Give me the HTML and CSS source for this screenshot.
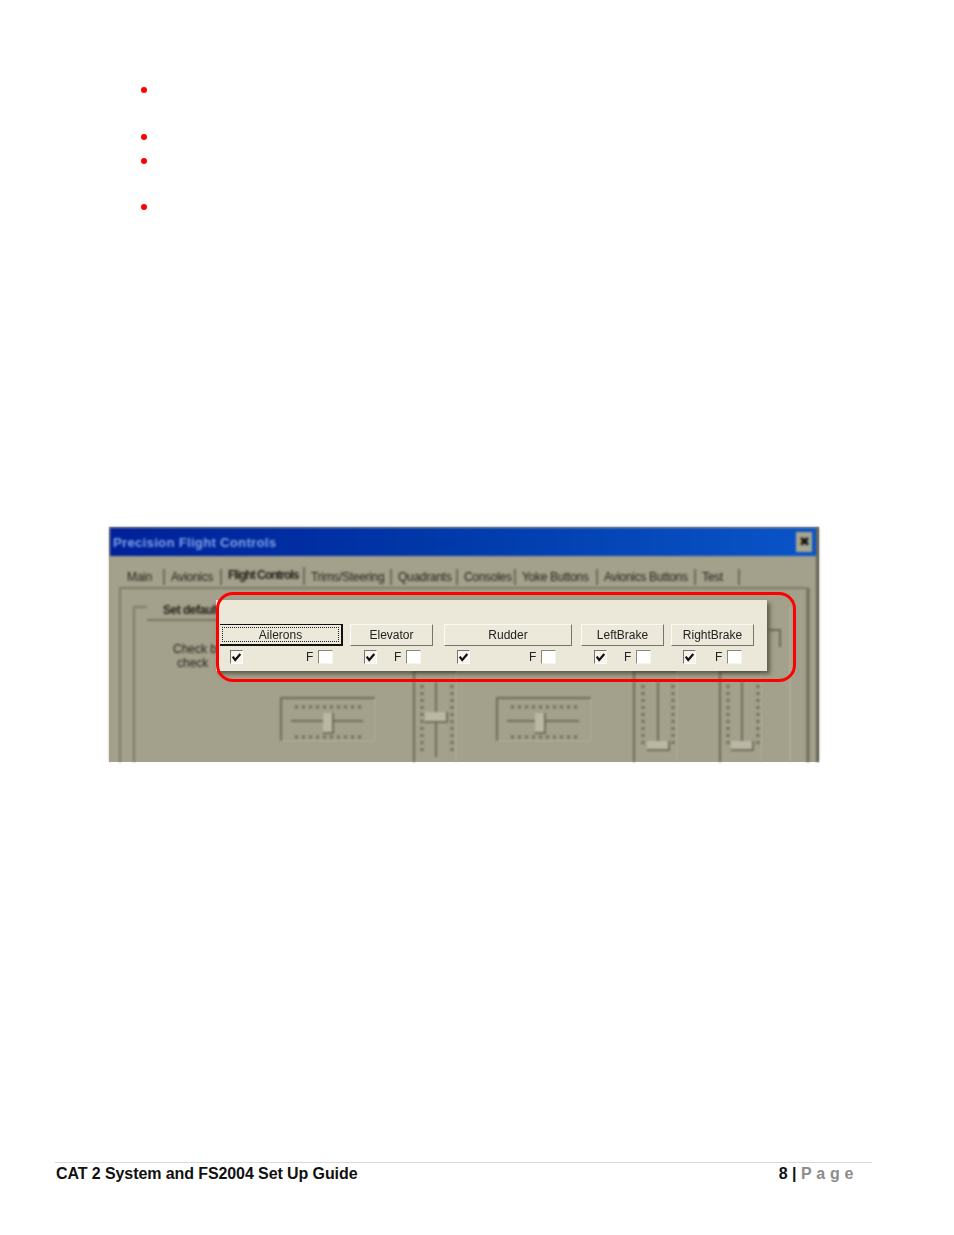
FILE: index.html
```html
<!DOCTYPE html>
<html lang="en">
<head>
<meta charset="utf-8">
<title>CAT 2 System and FS2004 Set Up Guide</title>
<link rel="stylesheet" href="styles.css">
</head>
<body>
<ul class="bullets">
  <li class="b-two"></li>
  <li class="b-one"></li>
  <li class="b-two"></li>
  <li class="b-last"></li>
</ul>
<figure class="dialog">
  <div class="backdrop">
    <div class="titlebar">
      <span class="title">Precision Flight Controls</span>
      <span class="close">✖</span>
    </div>
    <div class="tabs">
      <span class="tab t1">Main</span>
      <span class="tab t2">Avionics</span>
      <span class="tab t3 active">Flight Controls</span>
      <span class="tab t4">Trims/Steering</span>
      <span class="tab t5">Quadrants</span>
      <span class="tab t6">Consoles</span>
      <span class="tab t7">Yoke Buttons</span>
      <span class="tab t8">Avionics Buttons</span>
      <span class="tab t9">Test</span>
    </div>
    <svg class="canvas" width="710" height="235" viewBox="0 0 710 235">
      <g fill="none" stroke="#7f7c68" stroke-width="2">
        <path d="M11 235V61H698"/>
        <path d="M25 235V80H38"/>
        <path d="M38 93H108" stroke="#77745f"/>
        <path d="M660 103H671V120" stroke="#6b6855"/>
      </g>
      <path d="M699 61V235" stroke="#6e6b58" stroke-width="3"/>
      <path d="M681 80V235" stroke="#b3b09c" stroke-width="1.500"/>
      <g>
        <path d="M172 214V171H266" fill="none" stroke="#6f6c58" stroke-width="2"/>
        <path d="M266 171V214H172" fill="none" stroke="#b2af9b" stroke-width="1"/>
        <path d="M186 180H253M186 210H253" stroke="#6f6c58" stroke-width="3" stroke-dasharray="3 4"/>
        <path d="M182 194H254" stroke="#716e5a" stroke-width="2"/>
        <rect x="214" y="186" width="10" height="20" fill="#bab7a4"/>
        <path d="M224 186V206H214" fill="none" stroke="#5f5c49" stroke-width="1.500"/>
      </g>
      <g>
        <path d="M388 214V171H482" fill="none" stroke="#6f6c58" stroke-width="2"/>
        <path d="M482 171V214H388" fill="none" stroke="#b2af9b" stroke-width="1"/>
        <path d="M402 180H469M402 210H469" stroke="#6f6c58" stroke-width="3" stroke-dasharray="3 4"/>
        <path d="M398 194H470" stroke="#716e5a" stroke-width="2"/>
        <rect x="426" y="186" width="10" height="20" fill="#bab7a4"/>
        <path d="M436 186V206H426" fill="none" stroke="#5f5c49" stroke-width="1.500"/>
      </g>
      <g>
        <path d="M305 235V144H347" fill="none" stroke="#6f6c58" stroke-width="2"/>
        <path d="M347 144V235" stroke="#b2af9b"/>
        <path d="M313 158V226M343 158V226" stroke="#6f6c58" stroke-width="3" stroke-dasharray="3 4"/>
        <path d="M327 155V230" stroke="#716e5a" stroke-width="2"/>
        <rect x="316" y="185" width="22" height="10" fill="#bab7a4"/>
        <path d="M338 185V195H316" fill="none" stroke="#5f5c49" stroke-width="1.500"/>
      </g>
      <g>
        <path d="M525 235V144H568" fill="none" stroke="#6f6c58" stroke-width="2"/>
        <path d="M568 144V235" stroke="#b2af9b"/>
        <path d="M534 158V218M564 158V218" stroke="#6f6c58" stroke-width="3" stroke-dasharray="3 4"/>
        <path d="M549 155V216" stroke="#716e5a" stroke-width="2"/>
        <rect x="538" y="214" width="22" height="9" fill="#bab7a4"/>
        <path d="M560 214V223H538" fill="none" stroke="#5f5c49" stroke-width="1.500"/>
      </g>
      <g>
        <path d="M611 235V144H652" fill="none" stroke="#6f6c58" stroke-width="2"/>
        <path d="M652 144V235" stroke="#b2af9b"/>
        <path d="M619 158V218M649 158V218" stroke="#6f6c58" stroke-width="3" stroke-dasharray="3 4"/>
        <path d="M633 155V216" stroke="#716e5a" stroke-width="2"/>
        <rect x="622" y="214" width="22" height="9" fill="#bab7a4"/>
        <path d="M644 214V223H622" fill="none" stroke="#5f5c49" stroke-width="1.500"/>
      </g>
    </svg>
    <span class="group-tab">Set defaults</span>
    <span class="hint">Check box to<br><span class="hint-2">check</span></span>
  </div>

  <div class="panel">
    <div class="btn-row">
      <span class="btn b-ail"><span class="focus">Ailerons</span></span>
      <span class="btn b-ele">Elevator</span>
      <span class="btn b-rud">Rudder</span>
      <span class="btn b-lft">LeftBrake</span>
      <span class="btn b-rgt">RightBrake</span>
    </div>
    <div class="chk-row">
      <span class="chk c1"><svg viewBox="0 0 13 13"><path d="M2 6L5 10L11 3" fill="none" stroke="#111" stroke-width="2.600"/></svg></span>
      <span class="f f1">F</span><span class="box"></span>
      <span class="chk c2"><svg viewBox="0 0 13 13"><path d="M2 6L5 10L11 3" fill="none" stroke="#111" stroke-width="2.600"/></svg></span>
      <span class="f f2">F</span><span class="box"></span>
      <span class="chk c3"><svg viewBox="0 0 13 13"><path d="M2 6L5 10L11 3" fill="none" stroke="#111" stroke-width="2.600"/></svg></span>
      <span class="f f3">F</span><span class="box"></span>
      <span class="chk c4"><svg viewBox="0 0 13 13"><path d="M2 6L5 10L11 3" fill="none" stroke="#111" stroke-width="2.600"/></svg></span>
      <span class="f f4">F</span><span class="box"></span>
      <span class="chk c5"><svg viewBox="0 0 13 13"><path d="M2 6L5 10L11 3" fill="none" stroke="#111" stroke-width="2.600"/></svg></span>
      <span class="f f5">F</span><span class="box"></span>
    </div>
  </div>
  <div class="red-frame"></div>
</figure>
<footer class="footer">
  <span class="doc">CAT 2 System and FS2004 Set Up Guide</span>
  <span class="pg">8 | <span class="pg-word">Page</span></span>
</footer>
</body>
</html>
```
FILE: styles.css
```css
* { box-sizing: border-box; }
html, body { margin: 0; padding: 0; background: #fff; }
body { width: 954px; height: 1235px; overflow: hidden; font-family: "Liberation Sans", Arial, sans-serif; }

.bullets { list-style: none; margin: 0; padding: 87px 0 0 141px; }
.bullets li { width: 6px; }
.bullets li::before { content: ""; display: block; width: 6px; height: 6px; border-radius: 50%; background: #f00; }
.b-two { height: 47px; }
.b-one { height: 24px; }
.b-two + .b-one + .b-two { height: 46px; }
.b-last { height: 6px; }

.dialog { position: relative; width: 710px; height: 235px; margin: 317px 0 0 109px; background: #a3a08b; overflow: visible; }
.backdrop { position: absolute; inset: 0; overflow: hidden; filter: blur(1px); border-top: 1px solid #8d8c80; border-left: 1px solid #a3a08b; border-right: 3px solid #68665a; }

.titlebar { height: 28px; display: flex; align-items: center; justify-content: space-between; padding: 0 4px 0 3px; background: linear-gradient(90deg, #00209a 0%, #0038a8 45%, #0a55c8 100%); }
.title { font-size: 13px; font-weight: bold; color: #7d9fe0; letter-spacing: 0.350px; }
.close { width: 16px; height: 20px; background: #a8a590; color: #111; font-size: 13px; line-height: 20px; text-align: center; }

.tabs { display: flex; padding: 13px 0 0 17px; font-size: 12px; color: #24231b; letter-spacing: -0.300px; position: relative; z-index: 1; }
.tab { height: 16px; line-height: 16px; margin-right: 6px; border-right: 2px solid #6f6c58; white-space: nowrap; overflow: hidden; }
.t1 { width: 38px; }
.t2 { width: 51px; }
.t3 { width: 77px; }
.t4 { width: 81px; }
.t5 { width: 60px; }
.t6 { width: 52px; }
.t7 { width: 76px; }
.t8 { width: 92px; }
.t9 { width: 38px; }
.active { font-weight: bold; margin-top: -2px; height: 18px; letter-spacing: -1px; }

.canvas { position: absolute; left: -1px; top: -1px; }
.group-tab { position: absolute; left: 53px; top: 75px; white-space: nowrap; font-size: 12px; color: #24231b; font-weight: bold; letter-spacing: -0.500px; }
.hint { position: absolute; left: 63px; top: 114px; white-space: nowrap; font-size: 12px; line-height: 14px; color: #24231b; }
.hint-2 { margin-left: 4px; }

.panel { position: absolute; left: 107px; top: 73px; width: 551px; height: 71px; background: #ebe8d9; box-shadow: 3px 3px 4px rgba(50, 48, 35, 0.600); filter: blur(0.350px); color: #222; font-size: 12px; padding: 24px 0 0 4px; }
.btn-row { display: flex; height: 22px; }
.btn { display: flex; align-items: center; justify-content: center; height: 22px; background: #ece9da; border: 1px solid; border-color: #fbfaf4 #77756a #77756a #fbfaf4; }
.b-ail { width: 123px; border: 2px solid #111; border-top-width: 1px; border-left: 0; padding: 2px; }
.focus { display: block; width: 100%; height: 15px; line-height: 14px; text-align: center; border: 1px dotted #222; }
.b-ele { width: 83px; margin-left: 7px; }
.b-rud { width: 128px; margin-left: 11px; }
.b-lft { width: 83px; margin-left: 9px; }
.b-rgt { width: 83px; margin-left: 7px; }

.chk-row { display: flex; align-items: center; height: 15px; margin-top: 3px; }
.chk { width: 13px; height: 14px; background: #f6f4ec; border: 1px solid; border-color: #77756a #fff #fff #77756a; }
.chk svg { display: block; width: 11px; height: 12px; }
.box { width: 15px; height: 14px; margin-left: 6px; background: #fff; border: 1px solid; border-color: #8a8878 #f5f4ec #f5f4ec #8a8878; }
.f { width: 6px; }
.c1 { margin-left: 10px; }
.f1 { margin-left: 63px; }
.c2 { margin-left: 31px; }
.f2 { margin-left: 17px; }
.c3 { margin-left: 36px; }
.f3 { margin-left: 59px; }
.c4 { margin-left: 38px; }
.f4 { margin-left: 17px; }
.c5 { margin-left: 32px; }
.f5 { margin-left: 19px; }

.red-frame { position: absolute; left: 107px; top: 65px; width: 580px; height: 90px; border: 3px solid #f00; border-radius: 17px; }

.footer { display: flex; justify-content: space-between; align-items: baseline; width: 817px; height: 24px; margin: 400px 0 0 55px; padding: 2px 14px 0 1px; border-top: 1px solid #d9d9d9; font-size: 16px; font-weight: bold; color: #111; }
.doc { letter-spacing: -0.090px; }
.pg-word { color: #8c8c8c; letter-spacing: 4.700px; font-weight: bold; }
```
